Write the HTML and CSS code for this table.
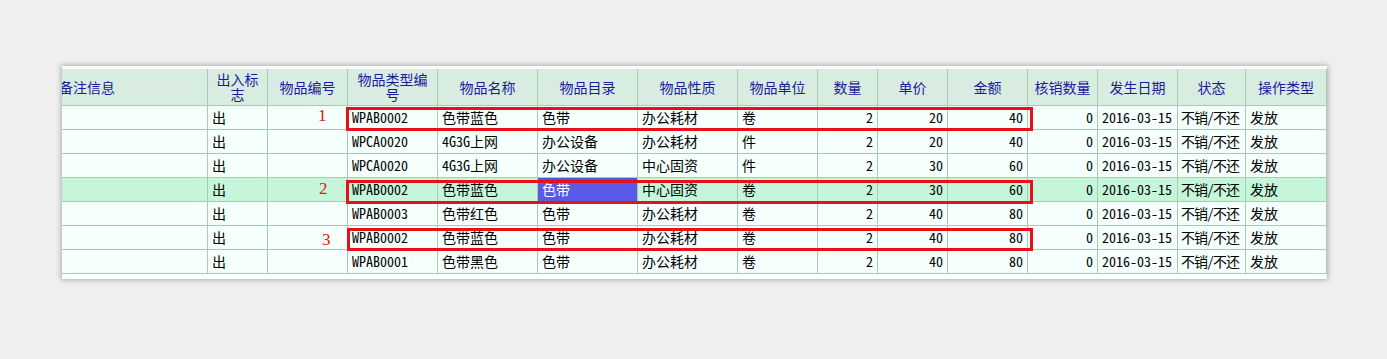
FILE: index.html
```html
<!DOCTYPE html>
<html lang="zh">
<head>
<meta charset="utf-8">
<link rel="stylesheet" href="styles.css">
</head>
<body>
<div class="panel">
  <div class="clip">
    <div class="grid-wrap">
      <table class="grid">
        <colgroup>
          <col style="width:153px"><col style="width:60px"><col style="width:80px"><col style="width:90px"><col style="width:100px"><col style="width:100px"><col style="width:100px"><col style="width:80px"><col style="width:60px"><col style="width:70px"><col style="width:80px"><col style="width:70px"><col style="width:80px"><col style="width:68px"><col style="width:81px">
        </colgroup>
        <thead>
          <tr>
            <th class="l">备注信息</th><th>出入标志</th><th>物品编号</th><th>物品类型编号</th><th>物品名称</th><th>物品目录</th><th>物品性质</th><th>物品单位</th><th>数量</th><th>单价</th><th>金额</th><th>核销数量</th><th>发生日期</th><th>状态</th><th>操作类型</th>
          </tr>
        </thead>
        <tbody>
          <tr><td></td><td>出</td><td></td><td>WPAB0002</td><td>色带蓝色</td><td>色带</td><td>办公耗材</td><td>卷</td><td class="r">2</td><td class="r">20</td><td class="r">40</td><td class="r">0</td><td>2016-03-15</td><td class="st">不销/不还</td><td>发放</td></tr>
          <tr><td></td><td>出</td><td></td><td>WPCA0020</td><td>4G3G上网</td><td>办公设备</td><td>办公耗材</td><td>件</td><td class="r">2</td><td class="r">20</td><td class="r">40</td><td class="r">0</td><td>2016-03-15</td><td class="st">不销/不还</td><td>发放</td></tr>
          <tr><td></td><td>出</td><td></td><td>WPCA0020</td><td>4G3G上网</td><td>办公设备</td><td>中心固资</td><td>件</td><td class="r">2</td><td class="r">30</td><td class="r">60</td><td class="r">0</td><td>2016-03-15</td><td class="st">不销/不还</td><td>发放</td></tr>
          <tr class="hl"><td></td><td>出</td><td></td><td>WPAB0002</td><td>色带蓝色</td><td class="sel">色带</td><td>中心固资</td><td>卷</td><td class="r">2</td><td class="r">30</td><td class="r">60</td><td class="r">0</td><td>2016-03-15</td><td class="st">不销/不还</td><td>发放</td></tr>
          <tr><td></td><td>出</td><td></td><td>WPAB0003</td><td>色带红色</td><td>色带</td><td>办公耗材</td><td>卷</td><td class="r">2</td><td class="r">40</td><td class="r">80</td><td class="r">0</td><td>2016-03-15</td><td class="st">不销/不还</td><td>发放</td></tr>
          <tr><td></td><td>出</td><td></td><td>WPAB0002</td><td>色带蓝色</td><td>色带</td><td>办公耗材</td><td>卷</td><td class="r">2</td><td class="r">40</td><td class="r">80</td><td class="r">0</td><td>2016-03-15</td><td class="st">不销/不还</td><td>发放</td></tr>
          <tr><td></td><td>出</td><td></td><td>WPAB0001</td><td>色带黑色</td><td>色带</td><td>办公耗材</td><td>卷</td><td class="r">2</td><td class="r">40</td><td class="r">80</td><td class="r">0</td><td>2016-03-15</td><td class="st">不销/不还</td><td>发放</td></tr>
        </tbody>
      </table>
      <div class="mark box1"></div>
      <div class="mark box2"></div>
      <div class="mark box3"></div>
      <span class="num n1">1</span>
      <span class="num n2">2</span>
      <span class="num n3">3</span>
    </div>
  </div>
</div>
</body>
</html>
```

FILE: styles.css
```css
html, body {
  margin: 0;
  padding: 0;
  background: #efefef;
}
body {
  padding-top: 66px;
  height: 293px;
}
.panel {
  margin-left: 62px;
  width: 1265px;
  background: #fbfdfc;
  box-shadow: 0 0 5px 1px rgba(0,0,0,0.28);
  padding: 2px 0 5px 0;
  border-top: 1px solid #ffffff;
}
.clip {
  overflow: hidden;
}
.grid-wrap {
  position: relative;
  margin-left: -8px;
  width: 1272px;
}
.grid {
  table-layout: fixed;
  border-collapse: collapse;
  width: 1272px;
  font-family: "Noto Sans Mono CJK SC", "Noto Sans CJK SC", monospace;
  font-size: 14px;
  color: #000;
}
.grid th {
  height: 36px;
  background: #d9ece1;
  color: #1a1a9c;
  font-family: "Noto Sans CJK SC", sans-serif;
  font-weight: normal;
  font-size: 14px;
  line-height: 15px;
  text-align: center;
  padding: 0 6px;
  border: 1px solid #a9cbb6;
  border-top: none;
}
.grid th.l {
  text-align: left;
  padding-left: 4px;
}
.grid td {
  height: 23px;
  padding: 0 4px;
  border: 1px solid #a9cbb6;
  background: #f5fffb;
  white-space: nowrap;
  overflow: visible;
  line-height: 23px;
}
.grid td.r {
  text-align: right;
}
.grid td.st {
  padding: 0 0 0 3px;
  letter-spacing: -1px;
}
.grid tr.hl td {
  background: #c5f6da;
}
.grid tr.hl td.sel {
  background: #5a5ae8;
  color: #ffffff;
  box-shadow: inset 0 2px 0 #3b5fd8;
}
.mark {
  position: absolute;
  border: 3px solid #e8101a;
  left: 292px;
  width: 681px;
  height: 18px;
}
.box1 { top: 38px; }
.box2 { top: 111px; }
.box3 { top: 159px; left: 293px; width: 680px; height: 17px; }
.num {
  position: absolute;
  color: #e01818;
  font-family: "Liberation Serif", serif;
  font-size: 17px;
  line-height: 17px;
}
.n1 { left: 264px; top: 38px; }
.n2 { left: 265px; top: 111px; }
.n3 { left: 268px; top: 162px; }
```
